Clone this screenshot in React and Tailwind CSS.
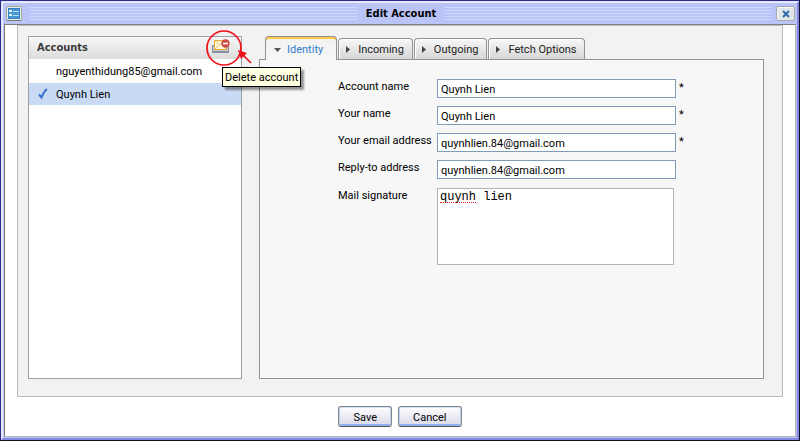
import { useState } from "react";

const font = "font-[Roboto,'Liberation_Sans',sans-serif]";
const headingFont = "font-['DejaVu_Sans_Condensed','DejaVu_Sans',sans-serif]";

const fields = [
  { id: "account-name", label: "Account name", value: "Quynh Lien", required: true },
  { id: "your-name", label: "Your name", value: "Quynh Lien", required: true },
  { id: "email", label: "Your email address", value: "quynhlien.84@gmail.com", required: true },
  { id: "reply-to", label: "Reply-to address", value: "quynhlien.84@gmail.com", required: false },
];

const tabs = ["Identity", "Incoming", "Outgoing", "Fetch Options"];

function WindowIcon() {
  return (
    <svg width="16" height="16" viewBox="0 0 16 16" aria-hidden="true">
      <rect x=".5" y=".5" width="15" height="14" rx="1.500" fill="#e9eef0" stroke="#a3a79f" />
      <path d="M1 14.500h14" stroke="#77796f" />
      <rect x="2" y="2" width="12" height="11" fill="#3482c0" />
      <rect x="3" y="3" width="10" height="9" fill="#4a96d0" />
      <rect x="3" y="4" width="3" height="2" fill="#d9f0ff" />
      <rect x="3" y="8" width="3" height="2" fill="#d9f0ff" />
      <rect x="7" y="5" width="6" height="1" fill="#b5dcf8" />
      <rect x="7" y="9" width="6" height="1" fill="#b5dcf8" />
    </svg>
  );
}

function DeleteMailIcon() {
  return (
    <svg width="18" height="15" viewBox="0 0 18 15" aria-hidden="true">
      <path d="M.5 6.500h16v7H.5z" fill="#c5cbd6" stroke="#8a8f9b" />
      <path d="M1 12.500h15" stroke="#8d94a3" />
      <path d="M2.500 1.500h12v9h-12z" fill="#fff7d8" stroke="#e9a93a" />
      <path d="M3 2l5 4 3-2M3 10l4-4M14 10l-4-4" fill="none" stroke="#f0cd80" />
      <circle cx="13.500" cy="4.500" r="4.200" fill="#d04a46" />
      <path d="M11 4.500h5" stroke="#fff" strokeWidth="1.600" />
    </svg>
  );
}

function TitleStripes() {
  return (
    <div className="h-[13px] flex-1 bg-[repeating-linear-gradient(to_bottom,#cfd7fc_0px,#cfd7fc_1px,#bac4f6_1px,#bac4f6_3px)]" />
  );
}

function Tab({ label, active, onSelect }) {
  return (
    <button
      type="button"
      role="tab"
      aria-selected={active}
      onClick={onSelect}
      className={
        active
          ? "flex h-6 items-center gap-[6px] rounded-t-[4px] border border-b-0 border-[#929292] bg-linear-to-b from-[#f2f2f2] to-[#f7f7f7] pt-[2px] pr-[13px] pl-2 text-[#2f7cc8] shadow-[inset_0_2px_0_#fdc843]"
          : "mb-px flex h-[21px] items-center gap-2 rounded-t-[4px] border border-b-0 border-[#929292] bg-linear-to-b from-[#f8f8f8] to-[#d6d6d6] pt-px pr-2 pl-[7px] text-[#222] shadow-[inset_1px_1px_0_#fff]"
      }
    >
      {active ? (
        <svg width="7" height="4" viewBox="0 0 7 4" aria-hidden="true">
          <path d="M0 0h7L3.500 4z" fill="#555" />
        </svg>
      ) : (
        <svg width="4" height="7" viewBox="0 0 4 7" aria-hidden="true">
          <path d="M0 0v7l4-3.500z" fill="#444" />
        </svg>
      )}
      {label}
    </button>
  );
}

function DialogButton({ children }) {
  return (
    <button
      type="button"
      className="h-[21px] rounded-[3px] border border-[#858585] border-b-[#555] bg-linear-to-b from-white to-[#d8d8e8] px-[14px] pt-[2px] shadow-[inset_0_1px_0_#cfe0fb,inset_1px_0_0_#bdd2f8,inset_-1px_0_0_#bdd2f8,inset_0_-2px_0_#8fb0ee]"
    >
      {children}
    </button>
  );
}

export default function App() {
  const [tab, setTab] = useState("Identity");
  return (
    <div className={`${font} border border-t-[#2a2a8c] border-r-[#101028] border-b-[#101018] border-l-[#2a2a8c] text-[11px] leading-4 text-black`}>
      <div className="border-2 border-t-[#e6e8fd] border-r-[#8488e4] border-b-[#8488e4] border-l-[#e6e8fd] bg-[#bac4f6] px-px pb-px">
        <header className="flex h-[21px] items-center gap-2 pr-px pl-[2px]">
          <WindowIcon />
          <TitleStripes />
          <h1 className={`${headingFont} leading-4 font-bold`}>Edit Account</h1>
          <TitleStripes />
          <button
            type="button"
            aria-label="Close"
            className="-ml-1 flex h-[15px] w-[19px] items-center justify-center rounded-[2px] border border-[#a5a9ae] bg-[#e3e7ea] shadow-[inset_1px_1px_0_#f4f6f7]"
          >
            <svg width="8" height="8" viewBox="0 0 8 8" aria-hidden="true">
              <path d="M1 1l6 6M7 1L1 7" stroke="#2d6ca8" strokeWidth="2" />
            </svg>
          </button>
        </header>

        <main className="border border-t-[#7f7f7f] border-r-[#b4b4b4] border-b-[#b4b4b4] border-l-[#7f7f7f] bg-white px-3 pb-[9px]">
          <div className="flex gap-[17px] border border-[#bbb] bg-[#f2f2f2] pt-[10px] pr-[18px] pb-[17px] pl-[10px]">
            <section className="flex w-[214px] flex-none flex-col border border-[#a0a0a0] bg-white">
              <div className="flex h-[22px] items-center justify-between bg-linear-to-b from-[#f7f7f7] to-[#dcdcdc] pr-[11px] pl-2">
                <h2 className={`${headingFont} leading-4 font-bold text-[#3a3a3a]`}>Accounts</h2>
                <div className="relative -mt-1">
                  <button type="button" aria-label="Delete account" aria-describedby="delete-tip" className="block">
                    <DeleteMailIcon />
                  </button>
                  <svg className="pointer-events-none absolute -top-[10px] -left-2 z-10" width="52" height="40" viewBox="0 0 52 40" aria-hidden="true">
                    <circle cx="20" cy="19" r="17" fill="none" stroke="#f0101c" strokeWidth="1.700" />
                    <path d="M47 34L38 25" stroke="#f0101c" strokeWidth="1.700" />
                    <path d="M34 21l9 3-6 6z" fill="#f0101c" />
                  </svg>
                  <span
                    id="delete-tip"
                    role="tooltip"
                    className="absolute top-[28px] left-[10px] z-20 border border-black bg-[#ffffe1] px-[2px] pt-px leading-[17px] whitespace-nowrap shadow-[3px_3px_2px_rgba(0,0,0,0.4)]"
                  >
                    Delete account
                  </span>
                </div>
              </div>
              <ul>
                <li className="flex h-6 items-center pt-px pl-[27px]">nguyenthidung85@gmail.com</li>
                <li className="flex h-[22px] items-center gap-2 bg-[#c9daf4] pl-[9px]">
                  <svg width="10" height="12" viewBox="0 0 10 12" aria-hidden="true">
                    <path d="M1 6.500l2.500 3C5 5.500 6.500 3 9 1" fill="none" stroke="#3b73c8" strokeWidth="2" />
                  </svg>
                  <span className="pt-[2px]">Quynh Lien</span>
                </li>
              </ul>
            </section>

            <section className="min-w-0 flex-1">
              <div role="tablist" className="relative z-10 -mb-px flex items-end gap-px pl-[6px]">
                {tabs.map((name) => (
                  <Tab key={name} label={name} active={name === tab} onSelect={() => setTab(name)} />
                ))}
              </div>
              <div role="tabpanel" className="border border-[#929292] bg-[#f7f7f7] pt-[19px] pr-4 pb-[113px] pl-[78px] shadow-[inset_-1px_-1px_0_#fff]">
                <form className="flex flex-col gap-2">
                  {fields.map((f) => (
                    <div key={f.id} className="flex h-[19px]">
                      <label htmlFor={f.id} className="w-[99px] flex-none whitespace-nowrap">
                        {f.label}
                      </label>
                      <input
                        id={f.id}
                        type="text"
                        defaultValue={f.value}
                        className="w-[239px] border border-[#7f9db9] bg-white px-[3px] pt-[2px] outline-none"
                      />
                      {f.required && <span className="pt-px pl-[3px]">*</span>}
                    </div>
                  ))}
                  <div className="flex pt-px">
                    <label htmlFor="signature" className="w-[99px] flex-none whitespace-nowrap">
                      Mail signature
                    </label>
                    <div className="relative h-[77px] w-[237px] border border-[#b4b4b4] bg-white">
                      <textarea
                        id="signature"
                        defaultValue="quynh lien"
                        spellCheck={false}
                        className="block h-full w-full resize-none px-[2px] font-['Liberation_Mono',monospace] text-[12px] leading-4 outline-none"
                      />
                      <span className="pointer-events-none absolute top-[13px] left-[2px] w-9 border-b border-dotted border-[#e02020]" />
                    </div>
                  </div>
                </form>
              </div>
            </section>
          </div>

          <footer className="flex justify-center gap-[6px] pt-[9px]">
            <DialogButton>Save</DialogButton>
            <DialogButton>Cancel</DialogButton>
          </footer>
        </main>
      </div>
    </div>
  );
}
